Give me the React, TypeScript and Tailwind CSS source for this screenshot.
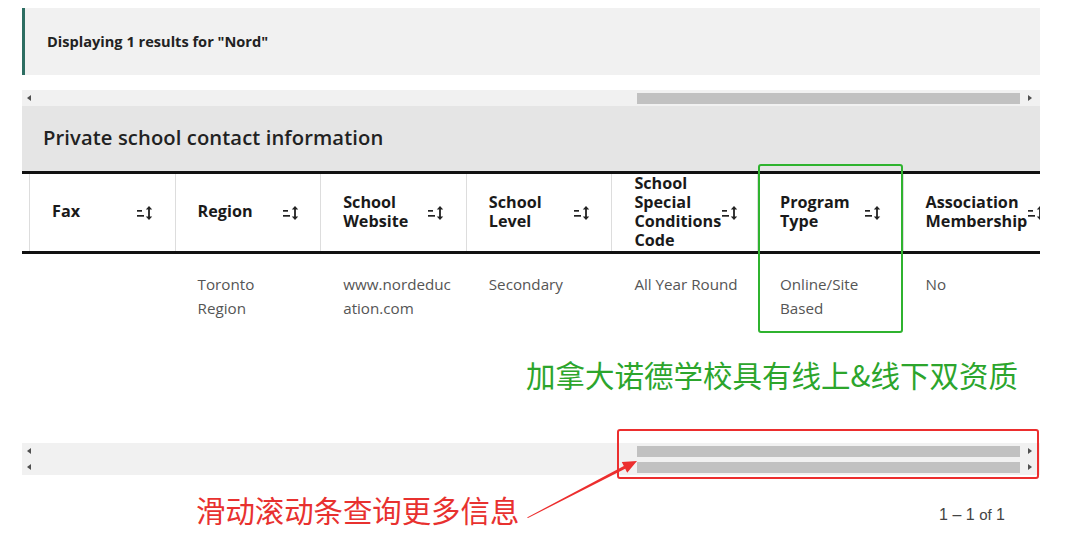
import React from "react";

const font = { fontFamily: '"Open Sans", "Noto Sans", sans-serif' };

function SortIcon() {
  return (
    <svg width="19" height="16" viewBox="0 0 19 16" className="shrink-0">
      <rect x="1" y="5" width="5" height="1.7" fill="#222" />
      <rect x="1" y="10" width="7" height="1.7" fill="#222" />
      <rect x="12.1" y="3" width="1.8" height="10" fill="#222" />
      <path d="M9.8 4.5 L13 1 L16.2 4.5 Z" fill="#222" />
      <path d="M9.8 11.5 L13 15 L16.2 11.5 Z" fill="#222" />
    </svg>
  );
}

function Track() {
  return (
    <div className="flex h-[16px] items-center bg-[#f1f1f1]">
      <div className="flex w-[14px] justify-center">
        <div className="h-0 w-0 border-y-[3.5px] border-r-[4px] border-y-transparent border-r-[#505050]" />
      </div>
      <div className="flex-1" />
      <div className="h-[11px] w-[383px] bg-[#c1c1c1]" />
      <div className="flex w-[20px] justify-center">
        <div className="h-0 w-0 border-y-[3.5px] border-l-[4px] border-y-transparent border-l-[#505050]" />
      </div>
    </div>
  );
}

const headers = [
  "Fax",
  "Region",
  "School Website",
  "School Level",
  "School Special Conditions Code",
  "Program Type",
  "Association Membership",
];
const cells = ["", "Toronto Region", "www.nordeducation.com", "Secondary", "All Year Round", "Online/Site Based", "No"];

export default function App() {
  return (
    <div className="relative h-[546px] w-[1080px] overflow-hidden bg-white" style={font}>
      <div className="ml-[22px] w-[1018px] pt-[8px]">
        {/* info box */}
        <div className="flex h-[67px] items-center border-l-[3px] border-[#2d6e62] bg-[#f1f1f1] pl-[22px]">
          <span className="text-[14.6px] font-bold text-[#222]">Displaying 1 results for "Nord"</span>
        </div>

        <div className="mt-[15px]">
          <Track />
        </div>

        {/* title band */}
        <div className="flex h-[65px] items-center bg-[#e5e5e5] pb-[3px] pl-[21px]">
          <span className="text-[20.2px] font-semibold tracking-[0.1px] text-[#222]">
            Private school contact information
          </span>
        </div>

        {/* table */}
        <div className="overflow-hidden">
          <div className="flex h-[83px] border-y-[3px] border-[#111]">
            <div className="w-[8px] shrink-0 border-r border-[#dddddd]" />
            {headers.map((h, i) => (
              <div
                key={h}
                className={`flex w-[145.6px] shrink-0 items-center pl-[22px] ${i < headers.length - 1 ? "border-r border-[#dddddd]" : ""}`}
              >
                <div className="min-w-[84px] shrink-0 pb-[2px] text-[16.2px] font-bold leading-[19px] text-[#1a1a1a]">
                  {h.split(" ").map((w, k) => (
                    <div key={k} className="whitespace-nowrap">{w}</div>
                  ))}
                </div>
                <SortIcon />
              </div>
            ))}
          </div>
          <div className="flex h-[80px]">
            <div className="w-[8px] shrink-0" />
            {cells.map((c, i) => (
              <div key={i} className="w-[145.6px] shrink-0 pl-[22px] pt-[18px]">
                <div className="w-[110px] text-[15.2px] leading-[24px] text-[#555]">
                  {c === "Toronto Region" ? (
                    <>Toronto<br />Region</>
                  ) : c === "Online/Site Based" ? (
                    <>Online/Site<br />Based</>
                  ) : c === "www.nordeducation.com" ? (
                    <>www.nordeduc<br />ation.com</>
                  ) : (
                    c
                  )}
                </div>
              </div>
            ))}
          </div>
        </div>

        <div className="h-[109px]" />

        <div className="flex flex-col">
          <Track />
          <Track />
        </div>

        <div className="flex justify-end pr-[35px] pt-[28px]">
          <span className="text-[16px] text-[#444]" style={{ fontFamily: '"Liberation Sans", Arial, sans-serif' }}>
            1 – 1 <span className="text-[15px]">of</span> 1
          </span>
        </div>
      </div>

      {/* annotations */}
      <div className="pointer-events-none absolute left-[758px] top-[164px] h-[169px] w-[145px] rounded-[3px] border-2 border-[#2fb32f]" />
      <div className="pointer-events-none absolute left-[617px] top-[429px] h-[50px] w-[422px] rounded-[3px] border-2 border-[#ec2e2e]" />
      <div
        className="pointer-events-none absolute left-[526px] top-[354px] whitespace-nowrap text-[29.5px] leading-[40px] text-[#2ca52c]"
        style={{ fontFamily: '"Noto Sans CJK SC", "Noto Sans", sans-serif' }}
      >
        加拿大诺德学校具有线上&amp;线下双资质
      </div>
      <div
        className="pointer-events-none absolute left-[196px] top-[489px] whitespace-nowrap text-[29.4px] leading-[40px] text-[#e8312f]"
        style={{ fontFamily: '"Noto Sans CJK SC", "Noto Sans", sans-serif' }}
      >
        滑动滚动条查询更多信息
      </div>
      <svg className="pointer-events-none absolute left-0 top-0" width="1080" height="546">
        <polygon
          points="527,517.5 623.8,466.1 621.8,462.1 637,461 627.2,472.7 625.2,468.7 528,518"
          fill="#ec2e2e"
        />
      </svg>
    </div>
  );
}
